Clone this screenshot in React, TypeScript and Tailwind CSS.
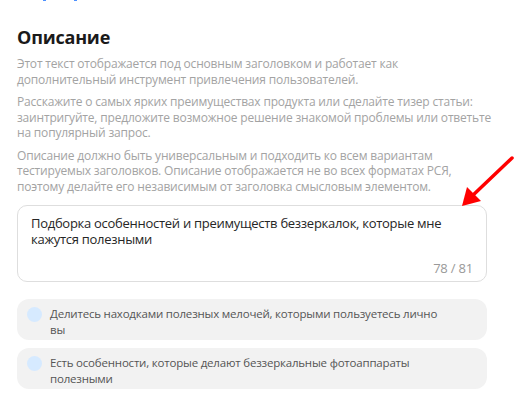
export default function App() {
  const suggestions = [
    "Делитесь находками полезных мелочей, которыми пользуетесь лично вы",
    "Есть особенности, которые делают беззеркальные фотоаппараты полезными",
  ];

  return (
    <div
      className="relative h-[396px] w-[523px] overflow-hidden bg-white px-[17px]"
      style={{ fontFamily: '"Open Sans", "Noto Sans", sans-serif' }}
    >
      {/* cut-off link from the block above */}
      <div className="flex h-[1px] gap-[28px] pl-[26px]">
        <div className="h-[1px] w-[3px] bg-[#4d90fe]" />
        <div className="h-[1px] w-[3px] bg-[#4d90fe]" />
      </div>

      <h2 className="mt-[25px] text-[18px] font-bold leading-[22px] tracking-[-0.2px] text-[#1a1a1a]">Описание</h2>

      <div className="mt-[8px] flex w-[482px] flex-col gap-[7px] text-[12px] leading-[15.5px] tracking-[-0.18px] text-[#a3a3a3]">
        <p>Этот текст отображается под основным заголовком и работает как дополнительный инструмент привлечения пользователей.</p>
        <p>
          Расскажите о самых ярких преимуществах продукта или сделайте тизер статьи: заинтригуйте, предложите возможное решение знакомой проблемы или ответьте на популярный запрос.
        </p>
        <p>
          Описание должно быть универсальным и подходить ко всем вариантам тестируемых заголовков. Описание отображается не во всех форматах РСЯ, поэтому делайте его независимым от заголовка смысловым элементом.
        </p>
      </div>

      <div className="mt-[11px] flex h-[77px] w-[470px] flex-col justify-between rounded-[10px] border border-[#dedede] px-[13px] pb-[5px] pt-[9px]">
        <p className="text-[13px] leading-[16px] tracking-[-0.28px] text-[#262626]">
          Подборка особенностей и преимуществ беззеркалок, которые мне кажутся полезными
        </p>
        <span className="self-end text-[13px] leading-[16px] tracking-[-0.2px] text-[#999]">78 / 81</span>
      </div>

      <div className="mt-[17px] flex flex-col gap-[8px]">
        {suggestions.map((text) => (
          <div key={text} className="flex h-[41px] w-[470px] gap-[8px] rounded-[12px] bg-[#f2f2f2] pl-[10px] pt-[7px]">
            <div className="mt-[1px] h-[15px] w-[15px] shrink-0 rounded-full bg-[#d6eaff]" />
            <p className="w-[390px] text-[11.5px] leading-[16px] tracking-[-0.2px] text-[#555]">{text}</p>
          </div>
        ))}
      </div>

      <svg className="absolute left-0 top-0" width="523" height="396" viewBox="0 0 523 396">
        <line x1="512" y1="158" x2="470" y2="198" stroke="#f00" strokeWidth="3.5" strokeLinecap="round" />
        <polygon points="462,206 467,187 481,201" fill="#f00" />
      </svg>
    </div>
  );
}
